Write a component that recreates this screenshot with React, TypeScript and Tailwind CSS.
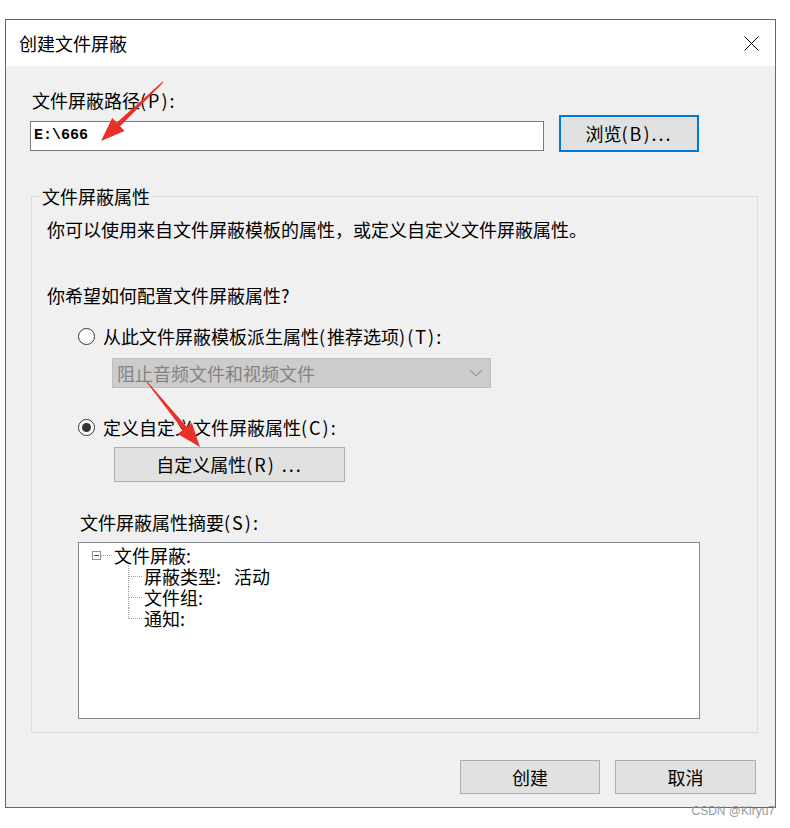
import React from "react";

// ASCII parts of the labels are a bit wider in the dialog's system font
const A = ({ children }: { children: React.ReactNode }) => (
	<span className="tracking-[2px]">{children}</span>
);

const Radio = ({ checked }: { checked?: boolean }) => (
	<span className="flex h-[17px] w-[17px] flex-none items-center justify-center rounded-full border border-[#333333] bg-white">
		{checked && <span className="h-[9px] w-[9px] rounded-full bg-[#333333]" />}
	</span>
);

const WinButton = ({ children, className }: { children: React.ReactNode; className: string }) => (
	<button
		className={`flex flex-none items-center justify-center border border-[#adadad] bg-[#e1e1e1] text-[18px] text-black ${className}`}
	>
		{children}
	</button>
);

const TreeChild = ({ label, last }: { label: string; last?: boolean }) => (
	<div className="flex h-[21px] items-center">
		{/* connector */}
		<div className="ml-[49px] flex h-full w-[14px] flex-none flex-col">
			{last ? (
				<div className="h-1/2 border-b border-l border-dotted border-[#a0a0a0]" />
			) : (
				<div className="h-full border-l border-dotted border-[#a0a0a0]">
					<div className="h-1/2 border-b border-dotted border-[#a0a0a0]" />
				</div>
			)}
		</div>
		<span className="ml-[2px] block h-[21px] overflow-visible text-[18px] leading-[21px] [word-spacing:9px]">
			{label}
		</span>
	</div>
);

const App = () => {
	return (
		<div className="relative h-[828px] w-[790px] overflow-hidden bg-white font-['Noto_Sans_CJK_SC',sans-serif] text-black">
			<div className="ml-[5px] mt-[19px] flex h-[789px] w-[771px] flex-col border border-[#1e79c4]">
				{/* Title bar */}
				<div className="flex h-[46px] flex-none items-center justify-between bg-white pl-[13px] pr-[16px]">
					<span className="text-[18px] leading-[26px]">创建文件屏蔽</span>
					<svg width="15" height="15" viewBox="0 0 15 15">
						<path d="M0.5 0.5 L14.5 14.5 M14.5 0.5 L0.5 14.5" stroke="#000" strokeWidth="1" />
					</svg>
				</div>

				{/* Body */}
				<div className="flex flex-1 flex-col bg-[#f0f0f0]">
					<div className="mt-[22px] pl-[26px] text-[18px] leading-[24px]">
						文件屏蔽路径<A>(P):</A>
					</div>

					<div className="mt-[3px] flex items-start pl-[24px]">
						<div className="mt-[6px] flex h-[30px] w-[514px] items-center border border-[#7a7a7a] bg-white pl-[3px] font-['Liberation_Mono',monospace] text-[15px] font-semibold">
							E:\666
						</div>
						<button className="ml-[15px] flex h-[37px] w-[140px] items-center justify-center border-2 border-[#0078d7] bg-[#e1e1e1] text-[18px]">
							浏览<A>(B)...</A>
						</button>
					</div>

					{/* Group */}
					<fieldset className="ml-[25px] mt-[31px] w-[727px] border border-[#dcdcdc]">
						<legend className="ml-[8px] px-[2px] text-[18px] leading-[26px]">文件屏蔽属性</legend>
						<div className="flex flex-col pb-[13px] pl-[15px] pt-[7px]">
							<div className="text-[18px] leading-[26px]">
								你可以使用来自文件屏蔽模板的属性，或定义自定义文件屏蔽属性。
							</div>
							<div className="mt-[40px] text-[18px] leading-[26px]">
								你希望如何配置文件屏蔽属性<A>?</A>
							</div>

							<div className="ml-[31px] mt-[15px] flex h-[26px] items-center gap-[8px]">
								<Radio />
								<span className="text-[18px] leading-[26px]">
									从此文件屏蔽模板派生属性<A>(</A>推荐选项<A>)(T):</A>
								</span>
							</div>
							<div className="ml-[65px] mt-[9px] flex h-[30px] w-[379px] items-center justify-between border border-[#bfbfbf] bg-[#cccccc] pl-[4px] pr-[7px]">
								<span className="text-[18px] leading-[26px] text-[#838383]">阻止音频文件和视频文件</span>
								<svg width="14" height="8" viewBox="0 0 14 8">
									<polyline points="1,1 7,7 13,1" fill="none" stroke="#9a9a9a" strokeWidth="1.2" />
								</svg>
							</div>

							<div className="ml-[31px] mt-[26px] flex h-[26px] items-center gap-[8px]">
								<Radio checked />
								<span className="text-[18px] leading-[26px]">
									定义自定义文件屏蔽属性<A>(C):</A>
								</span>
							</div>
							<WinButton className="ml-[67px] mt-[7px] h-[35px] w-[231px]">
								自定义属性<A>(R) ...</A>
							</WinButton>

							<div className="ml-[33px] mt-[27px] text-[18px] leading-[26px]">
								文件屏蔽属性摘要<A>(S):</A>
							</div>

							{/* Summary tree */}
							<div className="ml-[31px] mt-[7px] h-[177px] w-[622px] border border-[#828790] bg-white pt-[2px]">
								<div className="flex h-[21px] items-center">
									<span className="ml-[13px] flex h-[9px] w-[9px] flex-none items-center justify-center border border-[#919191] bg-white">
										<span className="h-px w-[5px] bg-[#1e4e8c]" />
									</span>
									<span className="w-[11px] border-t border-dotted border-[#a0a0a0]" />
									<span className="ml-[2px] block h-[21px] text-[18px] leading-[21px]">文件屏蔽:</span>
								</div>
								<TreeChild label="屏蔽类型: 活动" />
								<TreeChild label="文件组:" />
								<TreeChild label="通知:" last />
							</div>
						</div>
					</fieldset>

					{/* Footer */}
					<div className="mt-[27px] flex justify-end gap-[15px] pr-[19px]">
						<WinButton className="h-[34px] w-[140px]">创建</WinButton>
						<WinButton className="h-[34px] w-[141px]">取消</WinButton>
					</div>
				</div>
			</div>

			<div className="-mt-[4px] flex justify-end pr-[15px] font-['Liberation_Sans',sans-serif] text-[12px] leading-[14px] text-[#9a9a9a]">
				CSDN @Kiryu7
			</div>

			{/* Red annotation arrows */}
			<svg className="pointer-events-none absolute inset-0" width="790" height="828" viewBox="0 0 790 828">
				<polygon
					points="163.3,82.4 120.1,126.3 124.6,131 101,141 112.2,118 116.7,122.7 162.7,81.6"
					fill="#e8312a"
				/>
				<polygon
					points="146.6,382.3 182.9,430 177.8,434.1 200,447 191.8,422.7 186.7,426.8 147.4,381.7"
					fill="#e8312a"
				/>
			</svg>
		</div>
	);
};

export default App;
